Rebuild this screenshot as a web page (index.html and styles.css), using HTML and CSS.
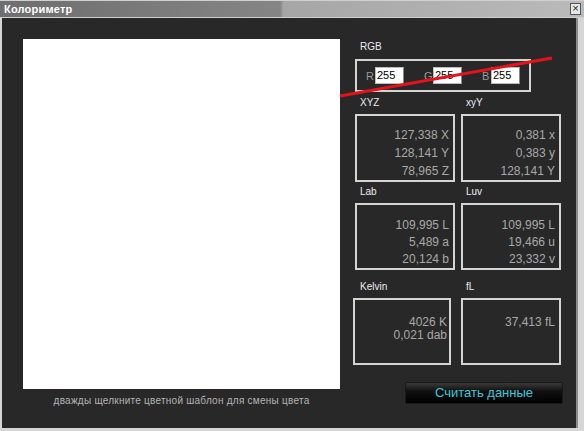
FILE: index.html
```html
<!DOCTYPE html>
<html>
<head>
<meta charset="utf-8">
<link rel="stylesheet" href="styles.css">
</head>
<body>
<div class="window">
  <div class="titlebar">
    <span class="title">Колориметр</span>
    <span class="close">×</span>
  </div>
  <div class="client">
    <div class="left">
      <div class="swatch"></div>
      <div class="caption">дважды щелкните цветной шаблон для смены цвета</div>
    </div>
    <div class="right">
      <div class="label rgb-label">RGB</div>
      <div class="rgbbox">
        <span class="ch">R</span><span class="inp">255</span>
        <span class="ch">G</span><span class="inp">255</span>
        <span class="ch">B</span><span class="inp">255</span>
      </div>
      <div class="grid">
        <div class="cell">
          <div class="label">XYZ</div>
          <div class="box b1"><div>127,338 X</div><div>128,141 Y</div><div>78,965 Z</div></div>
        </div>
        <div class="cell">
          <div class="label">xyY</div>
          <div class="box b1"><div>0,381 x</div><div>0,383 y</div><div>128,141 Y</div></div>
        </div>
        <div class="cell">
          <div class="label">Lab</div>
          <div class="box b2"><div>109,995 L</div><div>5,489 a</div><div>20,124 b</div></div>
        </div>
        <div class="cell">
          <div class="label">Luv</div>
          <div class="box b2"><div>109,995 L</div><div>19,466 u</div><div>23,332 v</div></div>
        </div>
        <div class="cell">
          <div class="label">Kelvin</div>
          <div class="box b3 kel"><div>4026 K</div><div>0,021 dab</div></div>
        </div>
        <div class="cell">
          <div class="label">fL</div>
          <div class="box b3"><div>37,413 fL</div></div>
        </div>
      </div>
      <div class="btnrow"><div class="btn">Считать данные</div></div>
    </div>
  </div>
  <svg class="redline" width="584" height="431" viewBox="0 0 584 431"><line x1="340" y1="96" x2="552" y2="58" stroke="#e5121b" stroke-width="3"/></svg>
</div>
</body>
</html>
```
FILE: styles.css
```css
html, body { margin: 0; padding: 0; }
body { width: 584px; height: 431px; overflow: hidden; background: #d6d6d6; font-family: "Liberation Sans", Arial, sans-serif; }
.window { position: relative; width: 584px; height: 431px; display: flex; flex-direction: column; }
.titlebar {
  height: 18px; box-sizing: border-box; flex: none;
  display: flex; align-items: center; justify-content: space-between;
  padding: 0 3px 0 4px;
  background: linear-gradient(to right, #6e6e6e 0%, #858585 48%, #a6a6a6 48.5%, #bababa 100%);
  border-top: 1px solid #d0d0d0; border-bottom: 1px solid #cfcfcf;
}
.title { color: #fff; font-weight: bold; font-size: 11px; letter-spacing: 0.2px; }
.close {
  width: 9px; height: 10px; line-height: 9px; text-align: center;
  font-size: 11px; color: #222; background: #e6e6e6; border: 1px solid #555;
}
.client {
  flex: none; height: 410px; width: 576px; margin-left: 2px; box-sizing: border-box;
  background: #282828; display: flex; padding: 21px 0 0 21px; gap: 15px;
  border-right: 2px solid #8d8d8d;
}
.left { width: 317px; display: flex; flex-direction: column; align-items: center; }
.swatch { width: 317px; height: 350px; background: #fff; }
.caption { margin-top: 6px; font-size: 10px; color: #b4b4b4; letter-spacing: 0.25px; }
.right { width: 210px; display: flex; flex-direction: column; }
.label { font-size: 10px; color: #ececec; height: 13px; line-height: 13px; padding-left: 5px; }
.rgb-label { margin-top: 1px; }
.rgbbox {
  margin-top: 6px; width: 176px; height: 33px; box-sizing: border-box;
  border: 2px solid #d4d4d4; display: flex; align-items: center; padding-left: 9px;
}
.ch { flex: none; font-size: 11px; color: #9a9a9a; width: 9px; }
.inp {
  flex: none; width: 29px; height: 17px; box-sizing: border-box; background: #fff; color: #000;
  font-size: 11px; line-height: 15px; padding-left: 1px; margin-right: 20px;
  border: 1px solid #bdbdbd; border-right-color: #888;
}
.inp:last-child { margin-right: 0; }
.grid { display: grid; grid-template-columns: 100px 100px; column-gap: 6px; margin-top: 3px; }
.cell { display: flex; flex-direction: column; }
.grid .label { margin-top: 1px; }
.box {
  margin-top: 5px; height: 68px; box-sizing: border-box; border: 2px solid #d4d4d4;
  text-align: right; color: #a8a8a8; font-size: 12px; padding-right: 4px;
}
.b1 { line-height: 18px; padding-top: 10px; margin-bottom: 2px; }
.b2 { line-height: 17px; padding-top: 12px; margin-bottom: 9px; height: 67px; }
.b3 { line-height: 13px; padding-top: 16px; height: 67px; }
.kel { margin-left: -2px; margin-right: 4px; padding-right: 2px; }
.btnrow { margin-top: 17px; padding-left: 50px; }
.btn {
  width: 158px; height: 22px; box-sizing: border-box; border-radius: 2px;
  background: linear-gradient(#3a3a3a 0%, #111 40%, #000 100%);
  border: 1px solid #1a1a1a; color: #3fc6d9; font-size: 13px; text-align: center; line-height: 20px;
}
.redline { position: absolute; left: 0; top: 0; pointer-events: none; }
```
